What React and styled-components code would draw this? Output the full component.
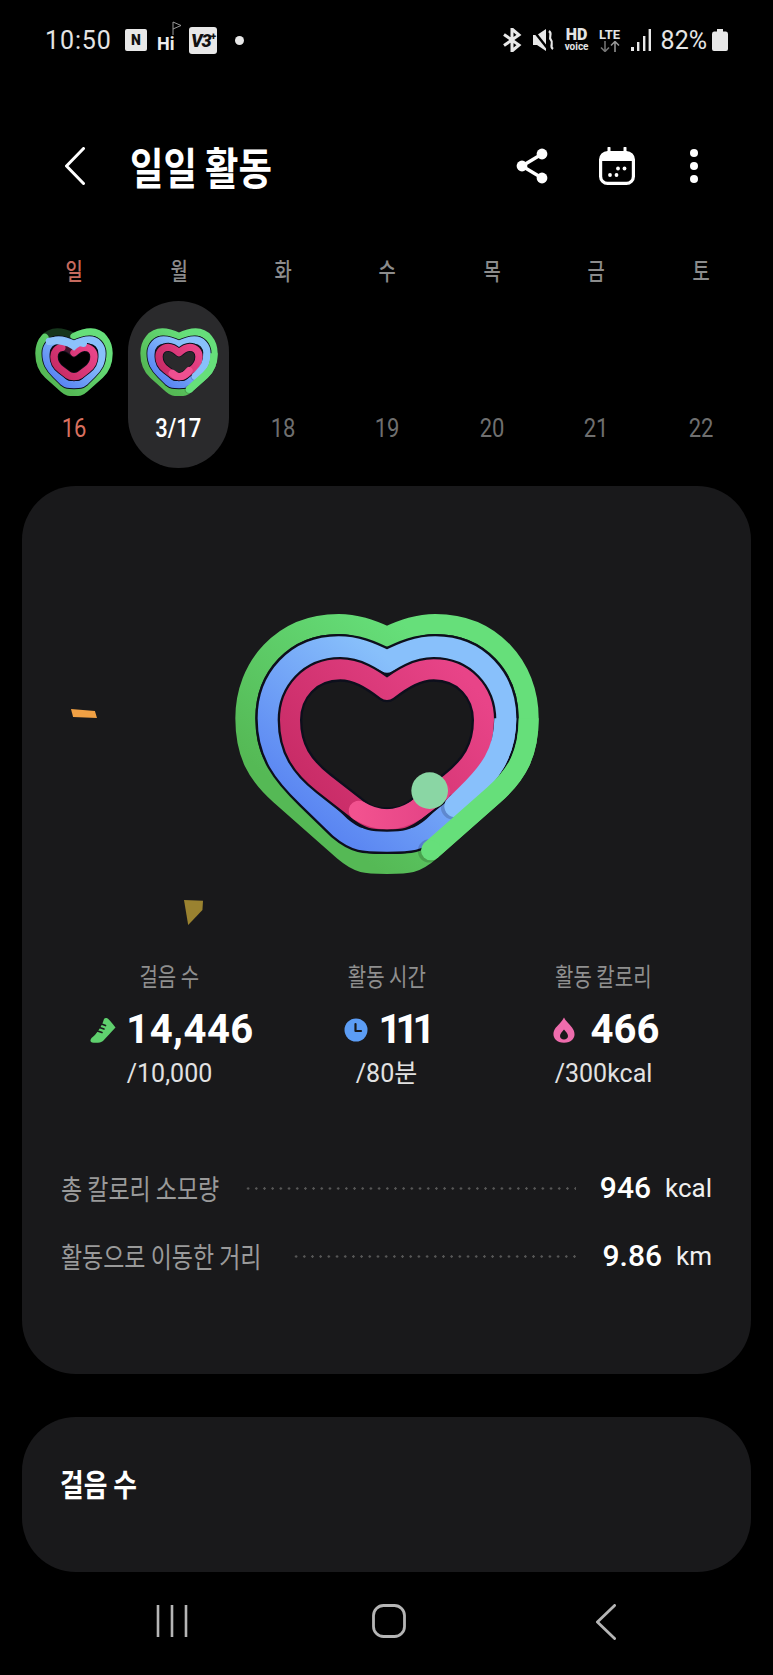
import styled, { createGlobalStyle } from "styled-components";

const GlobalStyle = createGlobalStyle`
  html, body {
    margin: 0;
    background: #000;
  }
  body {
    width: 773px;
    height: 1675px;
    overflow: hidden;
    font-family: "Noto Sans CJK KR", Roboto, sans-serif;
    color: #fff;
  }
`;

const Page = styled.div`
  width: 773px;
  height: 1675px;
  display: flex;
  flex-direction: column;
`;

/* status bar */
const StatusBar = styled.div`
  height: 80px;
  padding: 0 45px;
  box-sizing: border-box;
  display: flex;
  align-items: center;
  justify-content: space-between;
  color: #e4e4e4;
`;

const StatusGroup = styled.div`
  display: flex;
  align-items: center;
`;

const Clock = styled.span`
  font: 400 25px/1 Roboto, sans-serif;
  letter-spacing: 0.9px;
  width: 80px;
`;

const NBadge = styled.span`
  width: 22px;
  height: 22px;
  background: #e8e8e8;
  color: #111;
  border-radius: 2px;
  font: 900 14px/22px Roboto, sans-serif;
  text-align: center;
`;

const HiBadge = styled.span`
  position: relative;
  margin-left: 10px;
  width: 22px;
  font: 700 18px/1 Roboto, sans-serif;
  padding-top: 8px;
  color: #eee;
`;

const HiFlag = styled.svg`
  position: absolute;
  left: 14px;
  top: -6px;
`;

const VBadge = styled.span`
  margin-left: 10px;
  width: 28px;
  height: 27px;
  background: #e8e8e8;
  color: #111;
  border-radius: 3px;
  font: italic 900 18px/27px Roboto, sans-serif;
  text-align: center;
  letter-spacing: -1px;
`;

const VPlus = styled.sup`
  font-size: 10px;
  line-height: 0;
  font-style: normal;
`;

const StatusDot = styled.span`
  margin-left: 18px;
  width: 9px;
  height: 9px;
  border-radius: 50%;
  background: #e8e8e8;
`;

const StatusIcon = styled.svg`
  margin-left: ${(p) => p.$gap || 0}px;
  display: block;
`;

const HdBlock = styled.div`
  margin-left: 9px;
  width: 26px;
  display: flex;
  flex-direction: column;
  align-items: center;
  font-family: Roboto, sans-serif;
`;

const HdTop = styled.span`
  font-size: 16px;
  line-height: 14px;
  font-weight: 900;
`;

const HdBottom = styled.span`
  font-size: 10px;
  line-height: 10px;
  font-weight: 700;
`;

const LteBlock = styled.div`
  margin-left: 8px;
  width: 24px;
  display: flex;
  flex-direction: column;
  align-items: center;
  font-family: Roboto, sans-serif;
`;

const LteTop = styled.span`
  font-size: 13px;
  line-height: 12px;
  font-weight: 700;
`;

const Percent = styled.span`
  margin-left: 10px;
  font: 400 25px/1 Roboto, sans-serif;
`;

/* header */
const Header = styled.header`
  margin-top: 40px;
  height: 92px;
  padding: 0 74px 0 65px;
  display: flex;
  align-items: center;
`;

const Title = styled.h1`
  margin: 0 0 0 45px;
  width: 190px;
  font-size: 44px;
  line-height: 50px;
  font-weight: 700;
  white-space: nowrap;
  transform: scaleX(0.825);
  transform-origin: left center;
`;

const HeaderActions = styled.div`
  margin-left: auto;
  display: flex;
  align-items: center;
`;

const ActionSlot = styled.div`
  display: flex;
  margin-left: ${(p) => p.$gap || 0}px;
`;

/* week strip */
const Week = styled.section`
  margin-top: 43px;
  padding: 0 20px 0 22px;
  display: grid;
  grid-template-columns: repeat(7, 1fr);
`;

const Day = styled.div`
  display: flex;
  flex-direction: column;
  align-items: center;
`;

const Weekday = styled.span`
  height: 30px;
  font-size: 24px;
  line-height: 30px;
  font-weight: 500;
  color: ${(p) => (p.$sunday ? "#c66a5e" : "#8c8c8c")};
  transform: scaleX(0.78);
`;

const DayPill = styled.div`
  margin-top: 16px;
  width: 101px;
  height: 167px;
  border-radius: 51px;
  background: ${(p) => (p.$active ? "#2a2a2c" : "transparent")};
  display: flex;
  flex-direction: column;
  align-items: center;
`;

const MiniSlot = styled.div`
  margin-top: 24px;
  height: 75px;
  width: 80px;
`;

const DayDate = styled.span`
  margin-top: 14px;
  font: ${(p) => (p.$active ? 500 : 400)} 25px/30px Roboto, sans-serif;
  color: ${(p) => (p.$active ? "#fff" : p.$sunday ? "#d9705f" : "#6f6f6f")};
  transform: scaleX(0.88);
`;

/* cards */
const Card = styled.section`
  position: relative;
  width: 729px;
  margin: 18px auto 0;
  padding: 104px 39px 100px;
  box-sizing: border-box;
  background: #19191b;
  border-radius: 54px;
`;

const HeartStage = styled.div`
  display: flex;
  justify-content: center;
  height: 300px;
`;

const Shard = styled.div`
  position: absolute;
  left: ${(p) => p.$left}px;
  top: ${(p) => p.$top}px;
  width: ${(p) => p.$w}px;
  height: ${(p) => p.$h}px;
  background: ${(p) => p.$color};
  clip-path: polygon(${(p) => p.$points});
`;

const Stats = styled.div`
  margin-top: 70px;
  display: grid;
  grid-template-columns: repeat(3, 1fr);
`;

const Stat = styled.div`
  display: flex;
  flex-direction: column;
  align-items: center;
`;

const StatLabel = styled.span`
  font-size: 25px;
  line-height: 30px;
  color: #8f8f8f;
  white-space: nowrap;
  transform: scaleX(0.8);
`;

const StatValue = styled.div`
  margin-top: 18px;
  padding-left: ${(p) => p.$shift || 0}px;
  height: 44px;
  display: flex;
  align-items: center;
  gap: ${(p) => p.$gap}px;
`;

const StatNumber = styled.span`
  font: 700 40px/44px Roboto, sans-serif;
  letter-spacing: ${(p) => p.$track || 0}px;
  color: #fff;
`;

const StatGoal = styled.span`
  margin-top: 7px;
  font: 400 25px/30px Roboto, "Noto Sans CJK KR", sans-serif;
  color: #e2e2e2;
  white-space: nowrap;
`;

const Rows = styled.div`
  margin-top: 81px;
  display: flex;
  flex-direction: column;
  gap: 32px;
`;

const Row = styled.div`
  height: 36px;
  display: flex;
  align-items: center;
`;

const RowLabel = styled.span`
  flex: none;
  width: ${(p) => p.$width}px;
  font-size: 28px;
  line-height: 36px;
  color: #9a9a9a;
  white-space: nowrap;
  transform: scaleX(0.82);
  transform-origin: left center;
`;

const Leader = styled.span`
  flex: 1;
  height: 3px;
  margin-right: 24px;
  background-image: radial-gradient(circle, #565656 1.1px, transparent 1.4px);
  background-size: 8.2px 3px;
  background-repeat: repeat-x;
`;

const RowValue = styled.span`
  font: 500 30px/36px Roboto, sans-serif;
  color: #fff;
`;

const RowUnit = styled.span`
  margin-left: 14px;
  font: 400 26px/36px Roboto, sans-serif;
  color: #f0f0f0;
`;

const StepsCard = styled.section`
  width: 729px;
  height: 155px;
  margin: 43px auto 0;
  padding: 0 38px 24px;
  box-sizing: border-box;
  background: #19191b;
  border-radius: 54px;
  display: flex;
  align-items: center;
`;

const StepsTitle = styled.h2`
  margin: 0;
  font-size: 31px;
  line-height: 40px;
  font-weight: 700;
  white-space: nowrap;
  transform: scaleX(0.83);
  transform-origin: left center;
`;

/* navigation bar */
const NavBar = styled.nav`
  padding: 32px 59px 0 64px;
  display: grid;
  grid-template-columns: repeat(3, 1fr);
  justify-items: center;
`;

/* heart rings */
const BIG = {
  green: { a: 425, top: 102, notch: 140, bot: 822, mid: 385, lobe: 145, p1: [320, 615], p2: [130, 783], w: 60, line: 60 },
  blue: { a: 355, top: 172, notch: 215, bot: 752, mid: 385, lobe: 145, p1: [235, 620], p2: [140, 712], w: 66, line: 80 },
  pink: { a: 291, top: 238, notch: 300, bot: 688, mid: 390, lobe: 140, p1: [190, 580], p2: [85, 662], w: 60, line: 74 },
};

const MINI = {
  green: { a: 105, top: 66, notch: 80, bot: 247, mid: 130, lobe: 50, p1: [79, 195], p2: [32, 237], w: 22, line: 22 },
  blue: { a: 84, top: 90, notch: 103, bot: 224, mid: 130, lobe: 46, p1: [55, 193], p2: [33, 215], w: 22, line: 27 },
  pink: { a: 60, top: 112, notch: 128, bot: 200, mid: 140, lobe: 32, p1: [39, 179], p2: [18, 195], w: 22, line: 27 },
};

// control points of a ring's curves, relative to the centre line.
// flank and bottom leave the straight part along its own direction so there is no kink
function controls(r) {
  const [px, py] = r.p1;
  const [qx, qy] = r.p2;
  const len = Math.hypot(qx - px, qy - py);
  const ux = (qx - px) / len;
  const uy = (qy - py) / len;
  const k1 = Math.hypot(r.a - px, py - r.mid) * 0.38;
  const k2 = Math.hypot(qx, r.bot - qy) * 0.45;
  return {
    f1: [r.a, r.mid + (py - r.mid) * 0.45],
    f2: [px - ux * k1, py - uy * k1],
    b1: [qx + ux * k2, Math.min(qy + uy * k2, r.bot)],
    b2: [qx * 0.5, r.bot],
  };
}

function flank(cx, r) {
  const { f1, f2 } = controls(r);
  return `C${cx + f1[0]} ${f1[1]} ${cx + f2[0]} ${f2[1]} ${cx + r.p1[0]} ${r.p1[1]}`;
}

function ringPath(cx, r) {
  const x = (v) => cx + v;
  const m = (v) => cx - v;
  const { f1, f2, b1, b2 } = controls(r);
  const [px, py] = r.p1;
  const [qx, qy] = r.p2;
  return `M${cx} ${r.notch} C${x(r.lobe * 0.35)} ${r.notch - (r.notch - r.top) * 0.6} ${x(r.lobe * 0.65)} ${r.top} ${x(r.lobe)} ${r.top}
    C${x(r.lobe + (r.a - r.lobe) * 0.6)} ${r.top} ${x(r.a)} ${r.mid - (r.mid - r.top) * 0.55} ${x(r.a)} ${r.mid}
    ${flank(cx, r)} L${x(qx)} ${qy}
    C${x(b1[0])} ${b1[1]} ${x(b2[0])} ${b2[1]} ${cx} ${r.bot}
    C${m(b2[0])} ${b2[1]} ${m(b1[0])} ${b1[1]} ${m(qx)} ${qy}
    L${m(px)} ${py}
    C${m(f2[0])} ${f2[1]} ${m(f1[0])} ${f1[1]} ${m(r.a)} ${r.mid}
    C${m(r.a)} ${r.mid - (r.mid - r.top) * 0.55} ${m(r.lobe + (r.a - r.lobe) * 0.6)} ${r.top} ${m(r.lobe)} ${r.top}
    C${m(r.lobe * 0.65)} ${r.top} ${m(r.lobe * 0.35)} ${r.notch - (r.notch - r.top) * 0.6} ${cx} ${r.notch} Z`;
}

// the lap past 100%: comes down the right side and stops on the flank with a round head
function Overrun({ cx, ring, end, color }) {
  const shade = ring.w * 0.08;
  return (
    <>
      <circle cx={end[0] - shade} cy={end[1] + shade * 0.4} r={ring.w / 2 + shade} fill="#000" opacity="0.16" />
      <path d={`M${cx + ring.a} ${ring.mid} ${flank(cx, ring)} L${end[0]} ${end[1]}`} fill="none" stroke={color} strokeWidth={ring.w} />
      <circle cx={end[0]} cy={end[1]} r={ring.w / 2} fill={color} />
    </>
  );
}

function Rings({ id, cx, set, shape, children }) {
  const outline = "#0d0f1c";
  return (
    <>
      <defs>
        <linearGradient id={`${id}g`} x1="0" y1="1" x2="1" y2="0">
          <stop offset="0.22" stopColor="#55b955" />
          <stop offset="0.78" stopColor="#66df7a" />
        </linearGradient>
        <linearGradient id={`${id}b`} x1="0" y1="1" x2="1" y2="0">
          <stop offset="0.1" stopColor="#5680f1" />
          <stop offset="0.72" stopColor="#88c0fb" />
        </linearGradient>
        <linearGradient id={`${id}p`} x1="0" y1="0.8" x2="1" y2="0.2">
          <stop offset="0" stopColor="#c62a64" />
          <stop offset="1" stopColor="#e84488" />
        </linearGradient>
      </defs>
      {shape.green || (
        <path d={ringPath(cx, set.green)} fill="none" stroke={`url(#${id}g)`} strokeWidth={set.green.w} strokeLinejoin="round" />
      )}
      <path d={ringPath(cx, set.blue)} fill="none" stroke={outline} strokeWidth={set.blue.line} strokeLinejoin="round" />
      <path d={ringPath(cx, set.blue)} fill="none" stroke={`url(#${id}b)`} strokeWidth={set.blue.w} strokeLinejoin="round" />
      <path d={ringPath(cx, set.pink)} fill="none" stroke={outline} strokeWidth={set.pink.line} strokeLinejoin="round" />
      {shape.pink || (
        <path d={ringPath(cx, set.pink)} fill="none" stroke={`url(#${id}p)`} strokeWidth={set.pink.w} strokeLinejoin="round" />
      )}
      {children}
    </>
  );
}

function BigHeart() {
  const cx = 560;
  return (
    <svg width="370" height="300" viewBox="5 0 1110 900">
      <Rings id="big" cx={cx} set={BIG} shape={{}}>
        <defs>
          <linearGradient id="bigPinkEnd" gradientUnits="userSpaceOnUse" x1="470" y1="0" x2="720" y2="0">
            <stop offset="0" stopColor="#f2528f" />
            <stop offset="1" stopColor="#e34285" />
          </linearGradient>
        </defs>
        <Overrun cx={cx} ring={BIG.blue} end={[765, 649]} color="#88c0fb" />
        <Overrun cx={cx} ring={BIG.green} end={[692, 781]} color="#66df7a" />
        <path d="M475 662 C505 680 535 688 560 688 C585 688 615 680 645 662 L720 605" fill="none" stroke="url(#bigPinkEnd)" strokeWidth={BIG.pink.w} strokeLinecap="round" />
        <circle cx="688" cy="602" r="55" fill="#8ad6a4" />
      </Rings>
    </svg>
  );
}

function MiniHeart({ variant }) {
  const cx = 162;
  const dayOne = variant === "first";
  const greenPath = ringPath(cx, MINI.green);
  const pinkPath = ringPath(cx, MINI.pink);
  const shape = dayOne
    ? {
        green: (
          <>
            <path d={greenPath} fill="none" stroke="#16361c" strokeWidth={MINI.green.w} />
            <path d={greenPath} pathLength="100" fill="none" stroke={`url(#${variant}g)`} strokeWidth={MINI.green.w} strokeLinecap="round" strokeDasharray="85 100" />
          </>
        ),
        pink: (
          <>
            <path d={pinkPath} fill="none" stroke="#43162c" strokeWidth={MINI.pink.w} />
            <path d={pinkPath} pathLength="100" fill="none" stroke={`url(#${variant}p)`} strokeWidth={MINI.pink.w} strokeLinecap="round" strokeDasharray="88 100" />
          </>
        ),
      }
    : {};
  return (
    <svg width="80" height="75" viewBox="42 45 240 225">
      <Rings id={variant} cx={cx} set={MINI} shape={shape}>
        {dayOne ? (
          <path d="M190 100 C175 95 172 100 162 108 C145 95 115 88 88 94" fill="none" stroke="#8cc2fb" strokeWidth={MINI.blue.w} strokeLinecap="round" />
        ) : (
          <>
            <Overrun cx={cx} ring={MINI.blue} end={[211, 199]} color="#88c0fb" />
            <Overrun cx={cx} ring={MINI.green} end={[193, 238]} color="#66df7a" />
            <path d="M142 190 C150 197 155 200 162 200 C170 200 180 197 192 182" fill="none" stroke="#ef5090" strokeWidth={MINI.pink.w} strokeLinecap="round" />
          </>
        )}
      </Rings>
    </svg>
  );
}

/* small drawings */
const Chevron = ({ w, h, sw, color }) => (
  <svg width={w} height={h} viewBox={`0 0 ${w} ${h}`} fill="none">
    <path d={`M${w - sw / 2} ${sw / 2} L${sw / 2} ${h / 2} L${w - sw / 2} ${h - sw / 2}`} stroke={color} strokeWidth={sw} strokeLinecap="round" strokeLinejoin="round" />
  </svg>
);

const ShareIcon = () => (
  <svg width="32" height="36" viewBox="0 0 32 36">
    <path d="M26 6 L6 18 L26 30" fill="none" stroke="#fff" strokeWidth="3.4" />
    <circle cx="26" cy="6" r="5.4" fill="#fff" />
    <circle cx="6" cy="18" r="5.4" fill="#fff" />
    <circle cx="26" cy="30" r="5.4" fill="#fff" />
  </svg>
);

const CalendarIcon = () => (
  <svg width="36" height="38" viewBox="0 0 36 38" fill="none">
    <rect x="1.6" y="5.6" width="32.8" height="30.8" rx="7" stroke="#fff" strokeWidth="3.2" />
    <path d="M2 11 Q2 6 8 6 H28 Q34 6 34 11 V14 H2 Z" fill="#fff" />
    <path d="M10 1 V6 M26 1 V6" stroke="#fff" strokeWidth="3" strokeLinecap="round" />
    <circle cx="11" cy="28" r="1.9" fill="#fff" />
    <circle cx="17.5" cy="28" r="1.9" fill="#fff" />
    <circle cx="19" cy="21.5" r="1.9" fill="#fff" />
    <circle cx="25.5" cy="21.5" r="1.9" fill="#fff" />
  </svg>
);

const MoreIcon = () => (
  <svg width="10" height="36" viewBox="0 0 10 36">
    <circle cx="5" cy="5" r="4" fill="#fff" />
    <circle cx="5" cy="18" r="4" fill="#fff" />
    <circle cx="5" cy="31" r="4" fill="#fff" />
  </svg>
);

const ShoeIcon = () => (
  <svg width="26" height="26" viewBox="0 0 26 26">
    <path d="M16.5 1 C18 1 22 6 25.5 10.5 C21 15 17 20 13 24 C11 26 5 26 2 25.5 C0 25 0 23 1.5 21 C4 19 6 17 8 14 C10 11 13 6 14 2 C14.5 1 15.5 1 16.5 1 Z" fill="#5fd06e" />
    <path d="M7.5 14 L12 15.5 M9.5 10.5 L14 12 M11.5 7 L15.5 8.5" stroke="#19191b" strokeWidth="1.7" strokeLinecap="round" />
  </svg>
);

const ClockIcon = () => (
  <svg width="24" height="24" viewBox="0 0 24 24">
    <circle cx="12" cy="12" r="11.5" fill="#5c9df5" />
    <path d="M11.5 6 V13 H17" fill="none" stroke="#19191b" strokeWidth="2.2" strokeLinecap="round" strokeLinejoin="round" />
  </svg>
);

const FlameIcon = () => (
  <svg width="22" height="26" viewBox="0 0 22 26">
    <path d="M11 0.5 C12.5 4 16 6.5 19 10.5 C22 14.5 22.5 19 19.5 22.5 C17.5 24.8 14.5 25.8 11 25.8 C7.5 25.8 4.5 24.8 2.5 22.5 C-0.5 19 0 14.5 2.5 11 C5 8 9 5 11 0.5 Z" fill="#ee6cad" />
    <path d="M11 12.5 C12.5 14.5 15 16.5 15 19 C15 21.3 13.2 22.5 11 22.5 C8.8 22.5 7 21.3 7 19 C7 16.5 9.5 14.5 11 12.5 Z" fill="#19191b" />
  </svg>
);

const DAYS = [
  { name: "일", date: "16", sunday: true, heart: "first" },
  { name: "월", date: "3/17", active: true, heart: "second" },
  { name: "화", date: "18" },
  { name: "수", date: "19" },
  { name: "목", date: "20" },
  { name: "금", date: "21" },
  { name: "토", date: "22" },
];

export default function App() {
  return (
    <Page>
      <GlobalStyle />
      <StatusBar>
        <StatusGroup>
          <Clock>10:50</Clock>
          <NBadge>N</NBadge>
          <HiBadge>
            Hi
            <HiFlag width="11" height="14" viewBox="0 0 11 14" fill="none">
              <path d="M2 14 V1 L10 4.5 L2 8" stroke="#999" strokeWidth="1" />
            </HiFlag>
          </HiBadge>
          <VBadge>
            V3<VPlus>+</VPlus>
          </VBadge>
          <StatusDot />
        </StatusGroup>
        <StatusGroup>
          <StatusIcon width="20" height="24" viewBox="0 0 20 24" fill="none">
            <path d="M2 6.5 L17 17 L10 23 V1 L17 7 L2 17.5" stroke="#e8e8e8" strokeWidth="3" />
          </StatusIcon>
          <StatusIcon $gap={11} width="22" height="22" viewBox="0 0 22 22" fill="none">
            <path d="M0 6 H4 L13 0 V22 L4 16 H0 Z" fill="#e8e8e8" />
            <path d="M0 1 L15 20" stroke="#000" strokeWidth="2.4" />
            <path d="M16 2 C20 5 15 8 18 11 C21 14 16 17 20 20" stroke="#e8e8e8" strokeWidth="2.2" />
          </StatusIcon>
          <HdBlock>
            <HdTop>HD</HdTop>
            <HdBottom>voice</HdBottom>
          </HdBlock>
          <LteBlock>
            <LteTop>LTE</LteTop>
            <svg width="22" height="11" viewBox="0 0 22 11" fill="none">
              <path d="M6 0 V10 M2 6.5 L6 10.5 L10 6.5" stroke="#777" strokeWidth="1.5" />
              <path d="M16 11 V1 M12 4.5 L16 0.5 L20 4.5" stroke="#999" strokeWidth="1.5" />
            </svg>
          </LteBlock>
          <StatusIcon $gap={9} width="20" height="22" viewBox="0 0 20 22" fill="#e8e8e8">
            <rect x="0" y="18" width="3" height="4" />
            <rect x="6" y="13" width="2.4" height="9" />
            <rect x="12" y="7" width="2.4" height="15" />
            <rect x="17.6" y="0" width="2.4" height="22" />
          </StatusIcon>
          <Percent>82%</Percent>
          <StatusIcon $gap={5} width="16" height="22" viewBox="0 0 16 22" fill="#e8e8e8">
            <path d="M5 0 H11 V2.5 H14 Q16 2.5 16 5 V20 Q16 22 14 22 H2 Q0 22 0 20 V5 Q0 2.5 2 2.5 H5 Z" />
          </StatusIcon>
        </StatusGroup>
      </StatusBar>

      <Header>
        <Chevron w={20} h={38} sw={3} color="#fff" />
        <Title>일일 활동</Title>
        <HeaderActions>
          <ActionSlot>
            <ShareIcon />
          </ActionSlot>
          <ActionSlot $gap={51}>
            <CalendarIcon />
          </ActionSlot>
          <ActionSlot $gap={54}>
            <MoreIcon />
          </ActionSlot>
        </HeaderActions>
      </Header>

      <Week>
        {DAYS.map((d) => (
          <Day key={d.date}>
            <Weekday $sunday={d.sunday}>{d.name}</Weekday>
            <DayPill $active={d.active}>
              <MiniSlot>{d.heart && <MiniHeart variant={d.heart} />}</MiniSlot>
              <DayDate $active={d.active} $sunday={d.sunday}>
                {d.date}
              </DayDate>
            </DayPill>
          </Day>
        ))}
      </Week>

      <Card>
        <Shard $left={49} $top={223} $w={26} $h={9} $color="#f0a044" $points="0 0, 92% 22%, 100% 100%, 8% 88%" />
        <Shard $left={162} $top={414} $w={19} $h={25} $color="#9a8230" $points="0 0, 100% 3%, 97% 40%, 22% 100%" />
        <HeartStage>
          <BigHeart />
        </HeartStage>
        <Stats>
          <Stat>
            <StatLabel>걸음 수</StatLabel>
            <StatValue $gap={10} $shift={5}>
              <ShoeIcon />
              <StatNumber $track={0.5}>14,446</StatNumber>
            </StatValue>
            <StatGoal>/10,000</StatGoal>
          </Stat>
          <Stat>
            <StatLabel>활동 시간</StatLabel>
            <StatValue $gap={11}>
              <ClockIcon />
              <StatNumber $track={-6}>111</StatNumber>
            </StatValue>
            <StatGoal>/80분</StatGoal>
          </Stat>
          <Stat>
            <StatLabel>활동 칼로리</StatLabel>
            <StatValue $gap={16} $shift={5}>
              <FlameIcon />
              <StatNumber>466</StatNumber>
            </StatValue>
            <StatGoal>/300kcal</StatGoal>
          </Stat>
        </Stats>
        <Rows>
          <Row>
            <RowLabel $width={183}>총 칼로리 소모량</RowLabel>
            <Leader />
            <RowValue>946</RowValue>
            <RowUnit>kcal</RowUnit>
          </Row>
          <Row>
            <RowLabel $width={231}>활동으로 이동한 거리</RowLabel>
            <Leader />
            <RowValue>9.86</RowValue>
            <RowUnit>km</RowUnit>
          </Row>
        </Rows>
      </Card>

      <StepsCard>
        <StepsTitle>걸음 수</StepsTitle>
      </StepsCard>

      <NavBar>
        <svg width="32" height="34" viewBox="0 0 32 34" fill="none" stroke="#b5b5b5" strokeWidth="2.6">
          <path d="M2 1 V33 M16 1 V33 M30 1 V33" />
        </svg>
        <svg width="34" height="34" viewBox="0 0 34 34" fill="none">
          <rect x="1.5" y="1.5" width="31" height="31" rx="10" stroke="#b5b5b5" strokeWidth="2.8" />
        </svg>
        <Chevron w={20} h={36} sw={2.8} color="#b5b5b5" />
      </NavBar>
    </Page>
  );
}
